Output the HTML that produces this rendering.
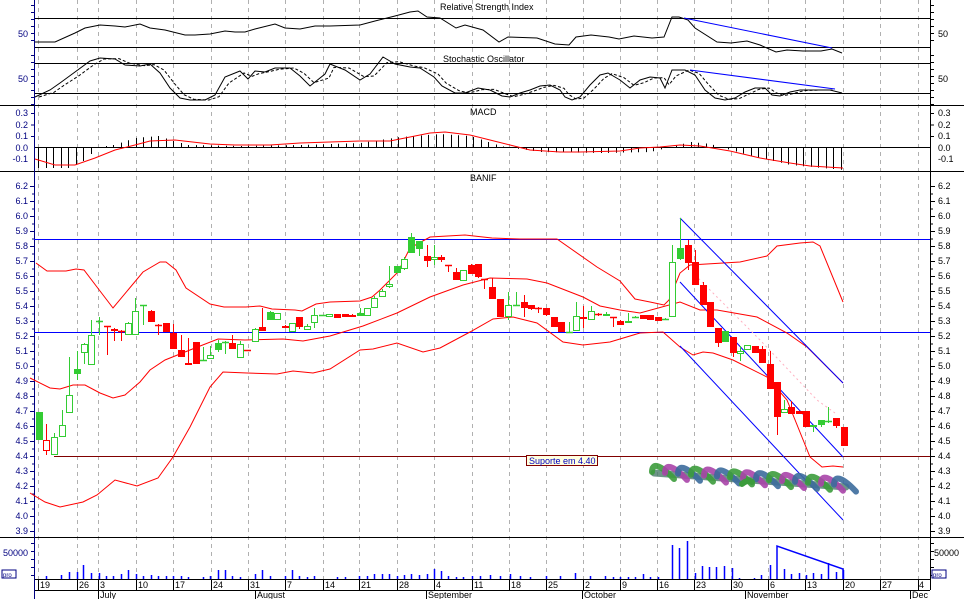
<!DOCTYPE html>
<html><head><meta charset="utf-8">
<style>
body{margin:0;background:#fff;width:964px;height:599px;overflow:hidden}
svg{display:block;font-family:"Liberation Sans",sans-serif}
.l{font-size:9px;fill:#000080}
.r{font-size:9px;fill:#000}
.t{font-size:9px;fill:#000}
</style></head><body>
<svg id="s" width="964" height="599" xmlns="http://www.w3.org/2000/svg">
<rect width="964" height="599" fill="#fff"/>
<g id="grid"></g>
<g id="lines" stroke="#000" stroke-width="1" shape-rendering="crispEdges">
<line x1="34" y1="18.5" x2="930" y2="18.5"/>
<line x1="34" y1="47.5" x2="930" y2="47.5"/>
<line x1="34" y1="63.5" x2="930" y2="63.5"/>
<line x1="34" y1="93.5" x2="930" y2="93.5"/>
<line x1="0" y1="105.5" x2="964" y2="105.5"/>
<line x1="34" y1="147.5" x2="930" y2="147.5"/>
<line x1="0" y1="171.5" x2="964" y2="171.5"/>
<line x1="0" y1="537.5" x2="964" y2="537.5"/>
<line x1="34" y1="579.5" x2="930" y2="579.5"/>
<line x1="34" y1="590.5" x2="930" y2="590.5"/>
</g>
<g id="dyn"></g>
<text class="t" x="440" y="10">Relative Strength Index</text>
<text class="t" x="443" y="62">Stochastic Oscillator</text>
<text class="t" x="470" y="115">MACD</text>
<text class="t" x="470" y="181">BANIF</text>
<g class="l" text-anchor="end">
<text x="28" y="37">50</text>
<text x="28" y="82">50</text>
<text x="28" y="116">0.3</text>
<text x="28" y="128">0.2</text>
<text x="28" y="139">0.1</text>
<text x="28" y="151">0.0</text>
<text x="28" y="162">-0.1</text>
<text x="28" y="189">6.2</text><text x="28" y="204">6.1</text><text x="28" y="219">6.0</text><text x="28" y="234">5.9</text>
<text x="28" y="249">5.8</text><text x="28" y="264">5.7</text><text x="28" y="279">5.6</text><text x="28" y="294">5.5</text>
<text x="28" y="309">5.4</text><text x="28" y="324">5.3</text><text x="28" y="339">5.2</text><text x="28" y="354">5.1</text>
<text x="28" y="369">5.0</text><text x="28" y="384">4.9</text><text x="28" y="399">4.8</text><text x="28" y="414">4.7</text>
<text x="28" y="429">4.6</text><text x="28" y="444">4.5</text><text x="28" y="459">4.4</text><text x="28" y="474">4.3</text>
<text x="28" y="489">4.2</text><text x="28" y="504">4.1</text><text x="28" y="519">4.0</text><text x="28" y="534">3.9</text>
<text x="28" y="556">50000</text>
</g>
<g class="r">
<text x="938" y="37">50</text>
<text x="938" y="82">50</text>
<text x="938" y="116">0.3</text>
<text x="938" y="128">0.2</text>
<text x="938" y="139">0.1</text>
<text x="938" y="151">0.0</text>
<text x="938" y="162">-0.1</text>
<text x="938" y="189">6.2</text><text x="938" y="204">6.1</text><text x="938" y="219">6.0</text><text x="938" y="234">5.9</text>
<text x="938" y="249">5.8</text><text x="938" y="264">5.7</text><text x="938" y="279">5.6</text><text x="938" y="294">5.5</text>
<text x="938" y="309">5.4</text><text x="938" y="324">5.3</text><text x="938" y="339">5.2</text><text x="938" y="354">5.1</text>
<text x="938" y="369">5.0</text><text x="938" y="384">4.9</text><text x="938" y="399">4.8</text><text x="938" y="414">4.7</text>
<text x="938" y="429">4.6</text><text x="938" y="444">4.5</text><text x="938" y="459">4.4</text><text x="938" y="474">4.3</text>
<text x="938" y="489">4.2</text><text x="938" y="504">4.1</text><text x="938" y="519">4.0</text><text x="938" y="534">3.9</text>
<text x="934" y="556">50000</text>
</g>
<rect x="2" y="570" width="14" height="8" fill="#fff" stroke="#000080" stroke-width="1"/>
<text x="3" y="577" style="font-size:6px;fill:#000080">pro</text>
<rect x="932" y="570" width="14" height="8" fill="#fff" stroke="#000080" stroke-width="1"/>
<text x="933" y="577" style="font-size:6px;fill:#000080">pro</text>
<g class="t" id="dates">
<text x="40" y="588">19</text><text x="79" y="588">26</text><text x="100" y="588">3</text><text x="138" y="588">10</text>
<text x="175" y="588">17</text><text x="213" y="588">24</text><text x="250" y="588">31</text><text x="287" y="588">7</text>
<text x="325" y="588">14</text><text x="361" y="588">21</text><text x="399" y="588">28</text><text x="436" y="588">4</text>
<text x="474" y="588">11</text><text x="511" y="588">18</text><text x="548" y="588">25</text><text x="585" y="588">2</text>
<text x="622" y="588">9</text><text x="659" y="588">16</text><text x="696" y="588">23</text><text x="733" y="588">30</text>
<text x="770" y="588">6</text><text x="807" y="588">13</text><text x="845" y="588">20</text><text x="882" y="588">27</text>
<text x="919" y="588">4</text>
<text x="100" y="598">July</text><text x="257" y="598">August</text><text x="428" y="598">September</text>
<text x="584" y="598">October</text><text x="747" y="598">November</text><text x="912" y="598">Dec</text>
</g>
<rect x="526.5" y="455.5" width="71" height="10" fill="#ffffe0" stroke="#800000"/>
<text x="529" y="464" style="font-size:9px;fill:#0000c0">Suporte em 4.40</text>
</svg>
<script>
var NS="http://www.w3.org/2000/svg",G=document.getElementById('dyn'),GR=document.getElementById('grid');
function el(p,t,a){var e=document.createElementNS(NS,t);for(var k in a)e.setAttribute(k,a[k]);p.appendChild(e);return e;}
function pl(pts,c,w,d){var a={points:pts.map(function(p){return p.join(',')}).join(' '),fill:'none',stroke:c,'stroke-width':w||1};if(d)a['stroke-dasharray']=d;return el(G,'polyline',a);}
var wk=[38,77,98,136,173,211,248,285,323,359,397,434,472,509,546,583,620,657,694,731,768,805,843,880,918];
wk.forEach(function(x){el(GR,'line',{x1:x+.5,y1:0,x2:x+.5,y2:579,stroke:'#b0b0b0','stroke-dasharray':'4,4'});
el(GR,'line',{x1:x+.5,y1:579,x2:x+.5,y2:590,stroke:'#000'});});
[98,255,426,582,745,910].forEach(function(x){el(GR,'line',{x1:x+.5,y1:590,x2:x+.5,y2:599,stroke:'#000'});});
el(G,'line',{x1:34.5,y1:0,x2:34.5,y2:599,stroke:'#000080'});
el(G,'line',{x1:930.5,y1:0,x2:930.5,y2:590,stroke:'#000'});
for(var y=186;y<=531;y+=7.5){var big=((y-186)%15)==0;el(G,'line',{x1:big?30:32,y1:y+.5,x2:34,y2:y+.5,stroke:'#000080'});el(G,'line',{x1:931,y1:y+.5,x2:big?935:933,y2:y+.5,stroke:'#000'});}
[[113,136,11.5],[5,45,7],[55,104,7],[543,575,8]].forEach(function(r){for(var y=r[0];y<=r[1];y+=r[2]){el(G,'line',{x1:31,y1:y+.5,x2:34,y2:y+.5,stroke:'#000080'});el(G,'line',{x1:931,y1:y+.5,x2:934,y2:y+.5,stroke:'#000'});}});
pl([[35,42],[55,42],[75,33],[85,28],[100,25],[115,26],[125,27],[140,24],[150,28],[165,30],[185,35],[195,35],[210,34],[225,31],[235,32],[245,32],[255,29],[275,24],[285,28],[300,29],[315,26],[330,26],[360,25],[375,21],[395,16],[410,12],[418,11],[427,17],[440,18],[456,28],[465,25],[483,30],[499,42],[508,37],[537,38],[555,44],[569,45],[576,37],[591,35],[609,37],[619,39],[634,36],[652,38],[664,37],[672,17],[679,17],[688,20],[695,28],[717,42],[731,43],[747,41],[760,45],[776,52],[787,50],[803,51],[821,51],[832,49],[842,53]],'#000',1);
pl([[684,18],[832,48]],'#0000ff',1);
var st=[[35,97],[50,90],[60,83],[75,72],[90,61],[100,58],[115,59],[125,65],[140,66],[150,64],[160,73],[170,88],[180,98],[190,100],[205,100],[215,95],[225,77],[240,71],[248,79],[255,71],[265,72],[275,68],[290,68],[300,76],[310,86],[325,74],[330,64],[345,70],[360,80],[370,74],[383,57],[395,64],[410,67],[420,68],[434,77],[442,86],[455,93],[465,93],[478,88],[490,90],[502,96],[510,97],[520,93],[530,90],[540,86],[550,85],[560,90],[565,97],[572,100],[580,97],[590,85],[600,75],[608,73],[620,80],[630,88],[640,80],[650,77],[660,78],[665,88],[672,70],[685,70],[695,75],[705,90],[715,98],[725,100],[735,98],[745,92],[755,88],[765,88],[772,95],[780,96],[790,92],[800,90],[815,90],[830,90],[842,93]];
pl(st,'#000',1);
pl(st.map(function(p,i){var q=st[Math.max(0,i-1)];return [p[0]+4,(p[1]*2+q[1])/3]}).filter(function(p){return p[0]<=843}),'#000',1,'3,2');
pl([[690,70],[835,89]],'#0000ff',1);
var ml=[[35,159],[55,165],[75,165],[95,158],[115,150],[135,145],[150,141],[175,140],[210,144],[235,145],[270,145],[300,143],[330,142],[360,141],[390,141],[400,139],[430,133],[445,132],[470,135],[490,140],[510,145],[530,150],[560,152],[580,152],[620,151],[640,148],[660,147],[680,145],[700,146],[730,151],[760,158],[790,163],[810,166],[843,168]];
function interp(a,x){for(var i=1;i<a.length;i++){if(x<=a[i][0]){var p=a[i-1],q=a[i],t=(x-p[0])/(q[0]-p[0]);return p[1]+t*(q[1]-p[1]);}}return a[a.length-1][1];}
var hb=[[38,168],[70,168],[83,161],[98,147],[113,145],[135,138],[158,136],[173,141],[188,145],[240,146],[300,145],[360,143],[400,137],[440,134],[470,136],[500,146],[540,152],[600,153],[650,152],[670,147],[690,142],[710,144],[730,150],[760,158],[790,165],[843,170]];
for(var x=38;x<=843;x+=7.5){var v=interp(hb,x);el(G,'line',{x1:Math.round(x)+.5,y1:147,x2:Math.round(x)+.5,y2:v,stroke:'#000'});}
pl(ml,'#ff0000',1);
el(G,'line',{x1:34,y1:239.5,x2:930,y2:239.5,stroke:'#0000ff'});
el(G,'line',{x1:34,y1:332.5,x2:930,y2:332.5,stroke:'#0000ff'});
el(G,'line',{x1:54,y1:456.5,x2:930,y2:456.5,stroke:'#800000'});
pl([[36,263],[47,271],[66,271],[76,269],[84,270],[100,291],[113,308],[143,272],[160,262],[166,262],[176,270],[186,288],[210,304],[224,307],[246,307],[260,306],[272,309],[295,310],[302,311],[316,304],[330,302],[360,301],[372,297],[380,290],[398,272],[410,248],[430,237],[465,235],[492,238],[520,239],[557,239],[597,267],[620,281],[635,299],[650,302],[664,305],[669,300],[680,273],[690,265],[740,262],[767,256],[777,246],[800,243],[813,242],[820,246],[843,302]],'#ff0000',1);
pl([[30,378],[50,388],[60,389],[73,385],[85,385],[100,393],[113,398],[125,395],[140,382],[150,370],[165,360],[195,348],[218,339],[245,340],[283,339],[303,341],[330,336],[363,326],[397,313],[430,297],[463,285],[490,278],[527,279],[547,283],[583,297],[600,306],[620,310],[640,313],[680,302],[700,310],[717,310],[757,317],[787,333],[807,347],[843,383]],'#ff0000',1);
pl([[30,493],[45,502],[60,507],[83,502],[97,495],[115,480],[137,486],[158,478],[173,457],[190,427],[210,387],[223,372],[247,373],[277,374],[293,371],[313,373],[330,369],[360,350],[373,349],[397,343],[423,352],[440,348],[470,332],[493,319],[513,317],[537,323],[563,342],[583,345],[610,342],[640,333],[663,332],[680,347],[693,355],[703,352],[713,353],[733,360],[767,377],[787,400],[810,457],[822,467],[833,466],[843,467]],'#ff0000',1);
pl([[695,275],[760,340],[817,400],[835,413]],'#ffb0c0',1,'2,3');
pl([[680,218],[843,383]],'#0000ff',1);
pl([[680,282],[843,457]],'#0000ff',1);
pl([[680,346],[843,520]],'#0000ff',1);
var C=[[39,412,440,412,440,'gf'],[46,440,451,424,455,'rh'],[54,437,455,433,455,'gh'],[62,425,437,410,437,'gh'],[69,395,413,357,413,'gh'],[77,369,374,351,380,'gf'],[84,344,353,343,364,'gh'],[91,335,365,320,365,'gh'],[99,321,322,317,335,'gh'],[107,326,326,326,355,'rf'],[114,329,331,328,341,'rf'],[121,331,331,330,341,'rf'],[128,323,335,322,335,'gh'],[135,311,335,298,335,'gh'],[143,305,305,305,325,'gf'],[151,311,322,310,322,'rf'],[158,325,325,324,335,'rf'],[166,323,332,323,332,'rf'],[173,333,349,324,349,'rf'],[181,350,357,335,357,'rf'],[188,363,365,338,365,'rh'],[196,342,364,342,364,'rf'],[203,360,360,347,360,'gf'],[210,355,359,346,359,'gh'],[218,343,350,340,352,'gf'],[225,342,342,341,354,'gf'],[232,343,349,335,349,'rf'],[240,344,358,341,358,'gh'],[247,350,350,350,350,'rf'],[255,329,342,328,342,'gh'],[262,327,331,308,331,'rf'],[270,312,320,311,320,'gf'],[277,313,320,313,320,'gh'],[285,326,328,325,328,'rh'],[292,323,332,323,332,'gh'],[299,317,327,317,329,'rf'],[307,326,330,324,330,'gh'],[314,315,323,308,328,'gh'],[322,315,315,315,315,'gf'],[329,314,317,314,317,'gh'],[337,314,318,314,318,'rf'],[345,314,317,314,317,'rf'],[352,315,317,314,317,'rf'],[360,313,316,308,316,'gf'],[367,308,316,308,316,'gh'],[374,298,308,296,308,'gh'],[382,291,297,289,297,'gh'],[389,284,287,266,288,'gh'],[397,266,273,266,273,'gf'],[404,259,269,257,270,'gh'],[411,237,253,233,253,'gf'],[419,241,249,241,256,'gf'],[427,256,261,245,267,'rf'],[434,257,260,245,265,'gh'],[441,257,260,255,262,'rf'],[448,265,265,265,272,'rf'],[456,272,280,268,280,'rf'],[463,270,281,270,281,'gh'],[471,265,274,264,274,'rf'],[478,264,277,264,278,'rf'],[484,279,279,279,289,'rf'],[492,287,299,278,299,'rf'],[500,299,317,299,317,'rf'],[508,305,317,292,320,'gh'],[516,305,305,292,305,'gf'],[524,302,308,295,317,'rf'],[531,305,309,305,310,'rf'],[538,308,308,307,313,'rf'],[546,308,315,308,316,'rf'],[554,317,327,317,327,'rf'],[561,322,332,322,332,'rf'],[569,332,332,322,332,'gf'],[576,316,331,302,331,'gh'],[583,317,319,306,328,'rf'],[591,311,320,306,320,'gh'],[598,314,315,313,316,'rf'],[606,314,316,312,316,'gh'],[613,317,317,317,327,'rf'],[620,321,325,320,325,'rf'],[628,321,323,313,323,'gh'],[635,317,317,316,317,'gf'],[643,315,319,315,319,'rf'],[650,315,320,315,320,'rf'],[658,317,321,317,321,'rf'],[665,319,319,318,320,'gf'],[672,262,317,245,317,'gh'],[680,248,259,218,260,'gf'],[688,245,263,240,270,'rf'],[695,262,285,250,285,'rf'],[703,285,305,282,305,'rf'],[710,302,327,302,327,'rf'],[718,328,343,328,347,'rf'],[725,331,342,331,342,'gf'],[733,337,353,337,357,'rf'],[740,351,354,346,361,'gh'],[747,345,350,345,350,'gh'],[755,346,353,346,353,'rf'],[762,349,363,346,363,'rf'],[770,364,389,351,389,'rf'],[777,382,417,382,435,'rf'],[784,409,413,400,413,'gh'],[791,407,414,401,414,'rf'],[799,411,414,411,414,'rf'],[806,411,427,411,427,'rf'],[813,425,427,425,432,'gf'],[821,420,425,420,427,'gf'],[828,421,422,407,423,'gh'],[836,418,426,418,428,'rf'],[844,427,446,427,446,'rf']];
C.forEach(function(c){var x=c[0],col=c[5][0]=='g'?'#33cc33':'#ff0000',f=c[5][1]=='f';
el(G,'line',{x1:x+.5,y1:c[3],x2:x+.5,y2:c[4],stroke:col});
var h=c[2]-c[1];
if(h<1.5){el(G,'line',{x1:x-3,y1:c[1]+.5,x2:x+4,y2:c[1]+.5,stroke:col,'stroke-width':1.5});}
else if(f)el(G,'rect',{x:x-3,y:c[1],width:7,height:h,fill:col});
else el(G,'rect',{x:x-2.5,y:c[1]+.5,width:6,height:h-1,fill:'#fff',stroke:col});});
// rope
var cols=['#3c9c3c','#a844a8','#3c6c9c'];
el(G,'path',{d:'M654 473 L846 487',stroke:'#4a7a6a','stroke-width':7,fill:'none','stroke-linecap':'round',opacity:0.8});
for(var i=0;i<15;i++){var x=650+i*13,yc=470+i*0.9;
el(G,'path',{d:'M'+(x+2)+' '+(yc+2)+' C'+(x+2)+' '+(yc-7)+' '+(x+9)+' '+(yc-7)+' '+(x+24)+' '+(yc+9),fill:'none',stroke:cols[i%3],'stroke-width':6,'stroke-linecap':'round',opacity:0.9});}
el(G,'path',{d:'M742 484 q6 -5 10 -2',stroke:'#3c9c3c','stroke-width':6,fill:'none','stroke-linecap':'round'});
var V=[[46,576],[61,575],[69,572],[77,572],[83,565],[91,573],[99,573],[106,576],[113,576],[121,574],[128,570],[136,574],[143,576],[151,575],[158,576],[166,576],[173,576],[181,576],[188,577],[203,577],[210,576],[218,570],[225,570],[232,576],[240,577],[255,574],[262,570],[270,576],[285,576],[292,570],[299,576],[307,577],[314,576],[337,577],[345,577],[359,576],[367,576],[374,574],[382,574],[389,574],[397,576],[404,575],[411,574],[419,575],[427,574],[434,569],[441,571],[448,576],[456,577],[463,577],[472,576],[480,576],[490,575],[500,576],[510,574],[520,576],[530,577],[546,576],[560,576],[575,573],[590,576],[605,576],[613,577],[620,577],[628,577],[635,577],[643,574],[650,577],[658,577],[672,545],[679,548],[687,541],[695,573],[702,566],[709,567],[716,567],[724,566],[732,568],[739,578],[754,578],[761,575],[770,565],[784,569],[791,574],[799,573],[806,575],[813,573],[821,574],[828,563],[836,572],[843,570]];
V.forEach(function(v){el(G,'line',{x1:v[0]+.5,y1:579,x2:v[0]+.5,y2:v[1],stroke:'#0000ff','stroke-width':1.5});});
pl([[777,579],[777,546],[843,569],[843,579]],'#0000ff',1.5);
</script>
</body></html>
